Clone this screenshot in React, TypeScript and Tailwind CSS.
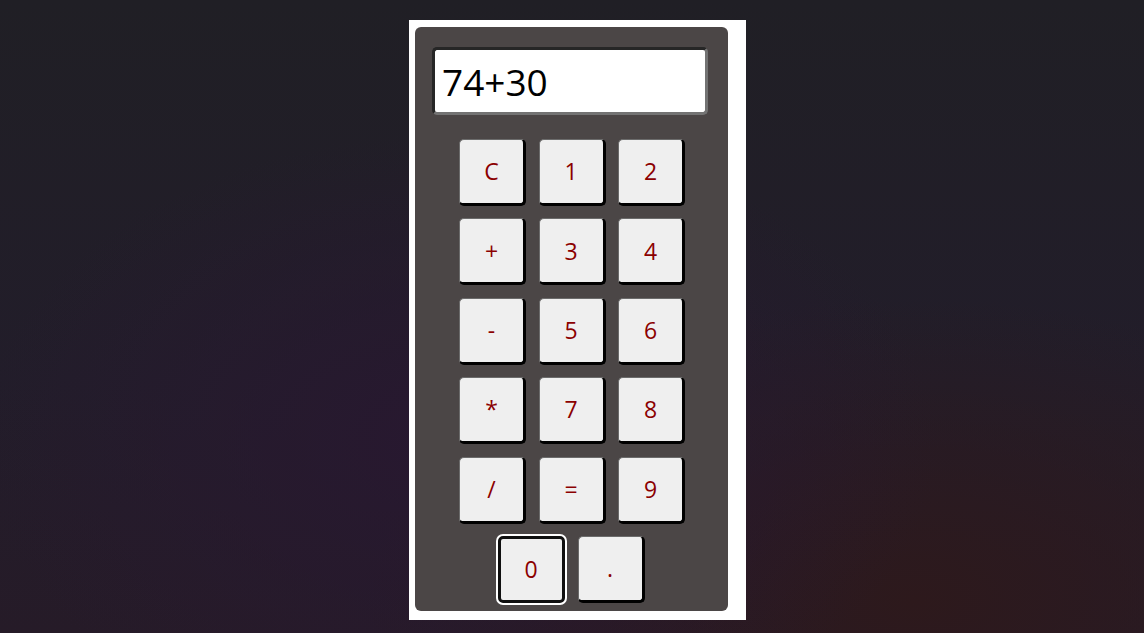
import { useState } from 'react'

const rows: string[][] = [
  ['C', '1', '2'],
  ['+', '3', '4'],
  ['-', '5', '6'],
  ['*', '7', '8'],
  ['/', '=', '9'],
]

function Key({ label, focused }: { label: string; focused?: boolean }) {
  return (
    <button
      className={
        focused
          ? 'w-[67px] h-[67px] rounded-[5px] bg-[#efefef] text-[#8b0000] text-[23px] border-[3px] border-[#101010] outline-2 outline-white'
          : 'w-[67px] h-[67px] rounded-[5px] bg-[#efefef] text-[#8b0000] text-[23px] border border-[#6b6b6b] border-r-[3px] border-b-[3px] border-r-black border-b-black'
      }
    >
      {label}
    </button>
  )
}

export default function App() {
  const [value] = useState('74+30')

  return (
    <div
      className="min-h-screen w-full flex justify-center pt-[20px] bg-[radial-gradient(ellipse_60%_70%_at_40%_70%,#281830_0%,transparent_70%),radial-gradient(ellipse_60%_60%_at_80%_95%,#2d191c_0%,transparent_80%),linear-gradient(180deg,#201f25_0%,#221d2a_60%,#261b28_100%)]"
      style={{ fontFamily: '"Open Sans", "Noto Sans", sans-serif' }}
    >
      <div className="ml-[10px] w-[337px] h-[600px] bg-white pl-[6px] pt-[7px]">
        <div className="w-[313px] h-[584px] bg-[#4b4646] rounded-[6px] pt-[20px] flex flex-col items-center">
          {/* Display */}
          <div className="w-[276px] h-[68px] bg-white rounded-[5px] border-[3px] border-t-[#262626] border-l-[#262626] border-r-[#737373] border-b-[#737373] flex items-center pl-[7px] ml-[-2px]">
            <span className="text-[37px] text-black leading-none">{value}</span>
          </div>

          {/* Keys */}
          <div className="mt-[24px] grid grid-cols-[67px_67px_67px] gap-x-[12.5px] gap-y-[12.4px] ml-[2px]">
            {rows.flat().map((k) => (
              <Key key={k} label={k} />
            ))}
          </div>
          <div className="mt-[12.4px] flex gap-[13px]">
            <Key label="0" focused />
            <Key label="." />
          </div>
        </div>
      </div>
    </div>
  )
}
